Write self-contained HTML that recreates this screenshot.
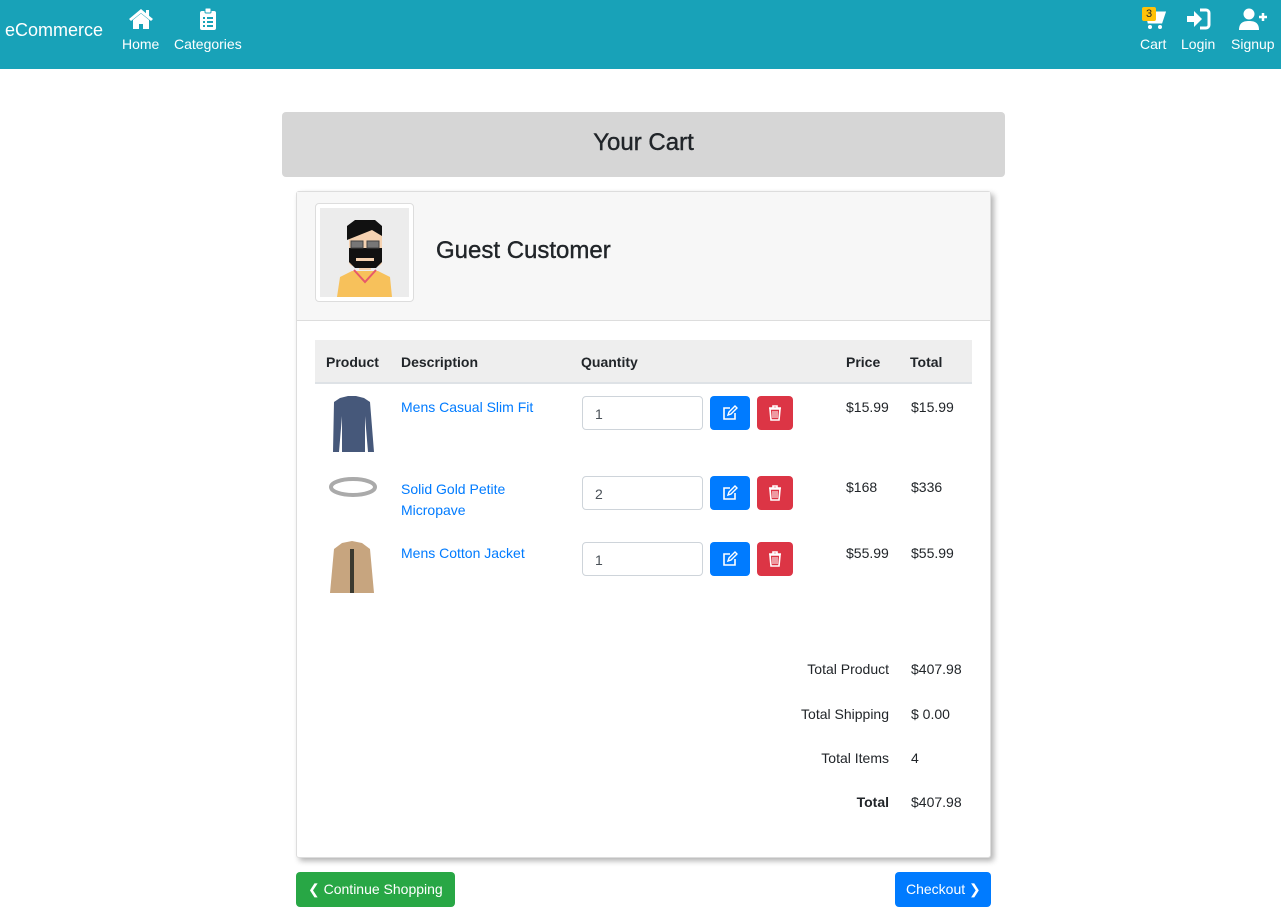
<!DOCTYPE html>
<html><head><style>
*{box-sizing:border-box;margin:0;padding:0}
body{width:1281px;height:918px;position:relative;background:#fff;font-family:"Liberation Sans",sans-serif;font-size:14px;color:#212529;overflow:hidden}
.a{position:absolute}
.nav{left:0;top:0;width:1281px;height:69px;background:#18a2b8;color:#fff}
.ni{position:absolute;top:8px;text-align:center;font-size:14px;color:#fff}
.ni svg{display:block;margin:0 auto 6px}
.lnk{color:#007bff}
.inp{width:121px;height:34px;border:1px solid #ced4da;border-radius:4px;padding:9px 12px;font-size:14px;color:#495057}
.btn{width:40px;height:34px;border-radius:4px;display:flex;align-items:center;justify-content:center}
.r{text-align:right}
</style></head><body>
<div class="a nav">
 <div class="a" style="left:5px;top:20px;font-size:18px">eCommerce</div>
 <div class="ni" style="left:122px"><svg width="26" height="22" viewBox="0 0 26 22"><path d="M13 1L1 11l2 2 10-8 10 8 2-2-4-3.3V2h-3v3.2z" fill="#fff"/><path d="M5 12l8-6.5 8 6.5v9h-6v-5h-4v5H5z" fill="#fff"/></svg>Home</div>
 <div class="ni" style="left:174px"><svg width="18" height="22" viewBox="0 0 18 22"><rect x="1" y="3" width="16" height="19" rx="2" fill="#fff"/><rect x="6" y="0" width="6" height="5" rx="1" fill="#fff" stroke="#18a2b8"/><g fill="#18a2b8"><rect x="4" y="9" width="2" height="2"/><rect x="8" y="9" width="6" height="2"/><rect x="4" y="13" width="2" height="2"/><rect x="8" y="13" width="6" height="2"/><rect x="4" y="17" width="2" height="2"/><rect x="8" y="17" width="6" height="2"/></g></svg>Categories</div>
 <div class="ni" style="left:1140px"><svg width="26" height="22" viewBox="0 0 26 22"><path d="M2 2h4l3 12h12l3-9H8" stroke="#fff" stroke-width="3" fill="#fff"/><circle cx="10" cy="19" r="2" fill="#fff"/><circle cx="20" cy="19" r="2" fill="#fff"/></svg>Cart</div>
 <div class="a" style="left:1142px;top:7px;width:14px;height:14px;background:#ffc107;color:#212529;font-size:11px;text-align:center;line-height:14px;border-radius:2px">3</div>
 <div class="ni" style="left:1181px"><svg width="26" height="22" viewBox="0 0 26 22"><path d="M2 8h7V3l8 8-8 8v-5H2z" fill="#fff"/><path d="M15 2h6a3 3 0 0 1 3 3v12a3 3 0 0 1-3 3h-6" stroke="#fff" stroke-width="3" fill="none"/></svg>Login</div>
 <div class="ni" style="left:1231px"><svg width="30" height="22" viewBox="0 0 30 22"><circle cx="11" cy="6" r="5.5" fill="#fff"/><path d="M1 22c0-7 4-9 10-9s10 2 10 9z" fill="#fff"/><path d="M25 5v8M21 9h8" stroke="#fff" stroke-width="2.5"/></svg>Signup</div>
</div>
<div class="a" style="left:282px;top:112px;width:723px;height:65px;background:#d6d6d6;border-radius:4px;text-align:center;line-height:61px;font-size:24px;-webkit-text-stroke:0.4px #212529">Your Cart</div>
<div class="a" style="left:296px;top:191px;width:695px;height:667px;border:1px solid #ddd;border-radius:3px;box-shadow:3px 3px 6px rgba(0,0,0,.3);background:#fff"></div>
<div class="a" style="left:297px;top:192px;width:693px;height:129px;background:#f7f7f7;border-bottom:1px solid #ddd"></div>
<div class="a" style="left:315px;top:203px;width:99px;height:99px;border:1px solid #ddd;border-radius:4px;background:#fff;padding:4px">
 <svg width="89" height="89" viewBox="0 0 89 89"><rect width="89" height="89" fill="#ececec"/><path d="M20 69l12-6h26l12 6 2 20H17z" fill="#f7c15b"/><path d="M34 62l11 12 11-12" stroke="#e7586a" stroke-width="2" fill="none"/><rect x="39" y="52" width="12" height="10" fill="#f5d2b1"/><rect x="29" y="18" width="33" height="40" rx="4" fill="#f5d2b1"/><path d="M27 37V18l8-6h20l7 6v10l-10-6-25 10z" fill="#111"/><path d="M29 40h33v14l-6 6H35l-6-6z" fill="#111"/><rect x="36" y="50" width="18" height="3" fill="#f5d2b1"/><rect x="31" y="33" width="12" height="7" fill="#777" stroke="#444"/><rect x="47" y="33" width="12" height="7" fill="#777" stroke="#444"/></svg>
</div>
<div class="a" style="left:436px;top:237px;font-size:24px;-webkit-text-stroke:0.4px #212529">Guest Customer</div>
<div class="a" style="left:315px;top:340px;width:657px;height:44px;background:#eee;border-bottom:2px solid #dee2e6"></div>
<div class="a" style="left:326px;top:354px;font-weight:bold">Product</div>
<div class="a" style="left:401px;top:354px;font-weight:bold">Description</div>
<div class="a" style="left:581px;top:354px;font-weight:bold">Quantity</div>
<div class="a" style="left:846px;top:354px;font-weight:bold">Price</div>
<div class="a" style="left:910px;top:354px;font-weight:bold">Total</div>

<svg class="a" style="left:328px;top:396px" width="48" height="58" viewBox="0 0 48 58"><path d="M12 2l8-2h8l8 2 6 4 4 50h-6l-3-36v36H14V20l-3 36H5L6 6z" fill="#46587a"/></svg>
<div class="a lnk" style="left:401px;top:399px">Mens Casual Slim Fit</div>
<div class="a inp" style="left:582px;top:396px">1</div>
<div class="a btn" style="left:710px;top:396px;background:#007bff"><svg width="16" height="16" viewBox="0 0 16 16"><path d="M8 3H2v11h11V8" stroke="#fff" stroke-width="1.6" fill="none"/><path d="M6 10l1-3 6-6 2 2-6 6z" stroke="#fff" stroke-width="1.4" fill="none"/></svg></div>
<div class="a btn" style="left:757px;top:396px;width:36px;background:#dc3545"><svg width="14" height="16" viewBox="0 0 14 16"><path d="M1 3h12M5 3V1h4v2M2 4h10l-1 11H3z" stroke="#fff" stroke-width="1.6" fill="none"/><path d="M5 6v7M7 6v7M9 6v7" stroke="#fff"/></svg></div>
<div class="a" style="left:846px;top:399px">$15.99</div>
<div class="a" style="left:911px;top:399px">$15.99</div>

<svg class="a" style="left:329px;top:476px" width="48" height="22" viewBox="0 0 48 22"><ellipse cx="24" cy="11" rx="22" ry="8" stroke="#aaa" stroke-width="4" fill="none"/></svg>
<div class="a lnk" style="left:401px;top:479px;line-height:21px">Solid Gold Petite<br>Micropave</div>
<div class="a inp" style="left:582px;top:476px">2</div>
<div class="a btn" style="left:710px;top:476px;background:#007bff"><svg width="16" height="16" viewBox="0 0 16 16"><path d="M8 3H2v11h11V8" stroke="#fff" stroke-width="1.6" fill="none"/><path d="M6 10l1-3 6-6 2 2-6 6z" stroke="#fff" stroke-width="1.4" fill="none"/></svg></div>
<div class="a btn" style="left:757px;top:476px;width:36px;background:#dc3545"><svg width="14" height="16" viewBox="0 0 14 16"><path d="M1 3h12M5 3V1h4v2M2 4h10l-1 11H3z" stroke="#fff" stroke-width="1.6" fill="none"/><path d="M5 6v7M7 6v7M9 6v7" stroke="#fff"/></svg></div>
<div class="a" style="left:846px;top:479px">$168</div>
<div class="a" style="left:911px;top:479px">$336</div>

<svg class="a" style="left:328px;top:541px" width="48" height="52" viewBox="0 0 48 52"><path d="M14 2l10-2 10 2 8 6 4 44H2L6 8z" fill="#c7a57f"/><path d="M22 8h4v44h-4z" fill="#3b3a30"/></svg>
<div class="a lnk" style="left:401px;top:545px">Mens Cotton Jacket</div>
<div class="a inp" style="left:582px;top:542px">1</div>
<div class="a btn" style="left:710px;top:542px;background:#007bff"><svg width="16" height="16" viewBox="0 0 16 16"><path d="M8 3H2v11h11V8" stroke="#fff" stroke-width="1.6" fill="none"/><path d="M6 10l1-3 6-6 2 2-6 6z" stroke="#fff" stroke-width="1.4" fill="none"/></svg></div>
<div class="a btn" style="left:757px;top:542px;width:36px;background:#dc3545"><svg width="14" height="16" viewBox="0 0 14 16"><path d="M1 3h12M5 3V1h4v2M2 4h10l-1 11H3z" stroke="#fff" stroke-width="1.6" fill="none"/><path d="M5 6v7M7 6v7M9 6v7" stroke="#fff"/></svg></div>
<div class="a" style="left:846px;top:545px">$55.99</div>
<div class="a" style="left:911px;top:545px">$55.99</div>

<div class="a r" style="left:700px;width:189px;top:661px">Total Product</div><div class="a" style="left:911px;top:661px">$407.98</div>
<div class="a r" style="left:700px;width:189px;top:706px">Total Shipping</div><div class="a" style="left:911px;top:706px">$ 0.00</div>
<div class="a r" style="left:700px;width:189px;top:750px">Total Items</div><div class="a" style="left:911px;top:750px">4</div>
<div class="a r" style="left:700px;width:189px;top:794px;font-weight:bold">Total</div><div class="a" style="left:911px;top:794px">$407.98</div>

<div class="a" style="left:296px;top:872px;width:159px;height:35px;background:#28a745;color:#fff;border-radius:4px;line-height:35px;padding-left:12px">&#10094; Continue Shopping</div>
<div class="a" style="left:895px;top:872px;width:96px;height:35px;background:#007bff;color:#fff;border-radius:4px;line-height:35px;padding-left:11px">Checkout &#10095;</div>
</body></html>
